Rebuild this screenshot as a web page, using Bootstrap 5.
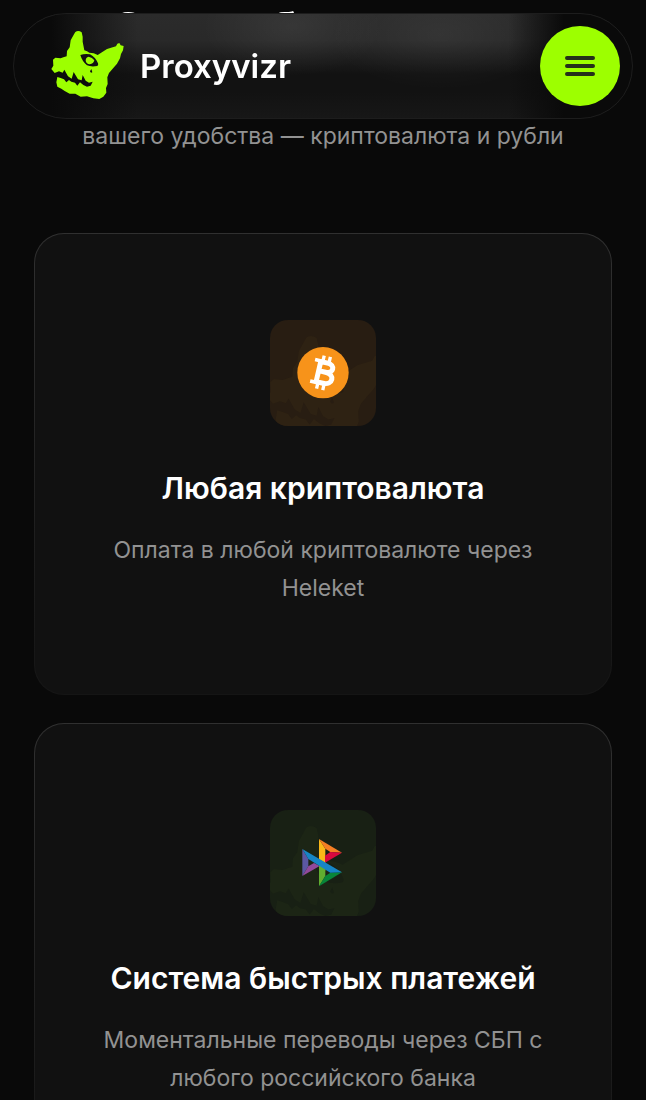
<!DOCTYPE html>
<html lang="ru" data-bs-theme="dark">
<head>
<meta charset="utf-8">
<meta name="viewport" content="width=device-width, initial-scale=1">
<title>Proxyvizr</title>
<link href="https://cdn.jsdelivr.net/npm/bootstrap@5.3.0/dist/css/bootstrap.min.css" rel="stylesheet">
<style>
  body { background: #090909; color: #fff; font-family: Inter, "Liberation Sans", sans-serif; overflow-x: hidden; }
  .site-bar {
    margin: 13px 13px 0; padding: 12px 12px 12px 36px;
    border: 1px solid #1d1d1d; border-radius: 60px;
    background:
      linear-gradient(90deg, #0a0a0a 6%, transparent 20%, transparent 80%, #0a0a0a 89%),
      radial-gradient(ellipse 90px 50px at 45% 12%, rgba(255,255,255,.06), transparent),
      radial-gradient(ellipse 110px 55px at 69% 20%, rgba(255,255,255,.05), transparent),
      linear-gradient(#2b2b2b, #292929 25%, #121212 58%, #121212 75%, #171717);
  }
  .brand-name { font-size: 33px; line-height: 40px; font-weight: 600; }
  .brand-mark { width: 78px; height: 72px; color: #9dff00; }
  .menu-btn { width: 80px; height: 80px; background: #9dff00; color: #24301a; }
  .menu-btn:hover { background: #8ce600; }
  .page-title { font-size: 50px; line-height: 60px; font-weight: 700; margin: 0; }
  .muted-text { font-size: 23px; line-height: 38px; color: #929292; margin: 0; }
  .intro { padding: 57px 0 78px; }
  .pay-card {
    padding: 86px 60px 87px; border: 1px solid transparent; border-radius: 30px;
    background: linear-gradient(#111, #111) padding-box, linear-gradient(#303030, #151515) border-box;
  }
  .pay-icon { width: 106px; height: 106px; border-radius: 18px; overflow: hidden; margin-bottom: 42px; }
  .pay-icon svg { display: block; }
  .pay-crypto { background: #281d12; color: #2e2213; }
  .pay-sbp { background: #182014; color: #1c2515; }
  .pay-title { font-size: 30px; line-height: 40px; font-weight: 600; margin: 0 0 23px; }
  .pay-list { gap: 28px; padding: 0 34px 28px; }
</style>
</head>
<body>
<svg width="0" height="0" class="position-absolute" aria-hidden="true">
  <symbol id="beast" viewBox="0 0 300 270" overflow="visible">
    <path fill="currentColor" fill-rule="evenodd" d="M110 36Q119 30 129 37L132 50L132 65L137 91Q146 94 152 98Q166 98 177 105L205 87L232 79L236 71L242 69L246 76L255 78L253 91L247 102L244 115L235 131L222 146L211 159L206 172L207 192L202 204L203 218L194 230L182 237L164 235L145 229L126 230L110 221L93 221L78 213L68 206L56 200L53 187L56 171L66 174L76 178L83 187L91 180L98 185L109 188L116 197L124 187L134 195L145 200L156 197L162 185L151 188L141 182L132 165L129 181L118 178L105 156L99 176L88 169L77 149L72 158L61 154L48 159L38 147L44 137L43 119L50 113L66 115L74 112L84 109L85 93L93 82L96 61L106 43ZM125 105Q137 101 154 103Q171 112 178 130Q180 135 176 138Q157 141 145 136Q131 125 125 105ZM150 110Q141 112 141 122Q143 132 153 133Q165 131 167 121Q161 112 150 110ZM158 147L154 154Q156 161 161 157Z"/>
  </symbol>
</svg>

<header class="site-bar fixed-top d-flex align-items-center justify-content-between">
  <a href="#" class="d-flex align-items-center gap-2 text-white text-decoration-none">
    <svg class="brand-mark" viewBox="34 30 234 216" aria-hidden="true"><use href="#beast" width="300" height="270"/></svg>
    <span class="brand-name ms-1">Proxyvizr</span>
  </a>
  <button type="button" class="menu-btn btn border-0 rounded-circle p-0 d-flex align-items-center justify-content-center" aria-label="Меню">
    <svg width="32" height="22" viewBox="0 0 32 22" stroke="currentColor" stroke-width="4" stroke-linecap="round" aria-hidden="true"><path d="M3 3H29M3 11H29M3 19H29"/></svg>
  </button>
</header>

<main class="text-center">
  <h1 class="page-title">Способы оплаты</h1>
  <div class="intro"><p class="muted-text">вашего удобства — криптовалюта и рубли</p></div>

  <div class="pay-list d-flex flex-column">
    <section class="pay-card">
      <div class="pay-icon pay-crypto mx-auto">
        <svg width="106" height="106" viewBox="0 0 318 318" aria-hidden="true">
          <use href="#beast" width="300" height="270" transform="translate(-69 -6) scale(1.62)"/>
          <circle cx="159" cy="158" r="77" fill="#f7931a"/>
          <g transform="translate(159 158) rotate(13)" fill="none" stroke="#fff">
            <path stroke-width="10" d="M-8 -51V-29M11 -51V-29M-8 29V51M11 29V51"/>
            <path stroke-width="11" d="M-32 -33H-10M-32 33H-10"/>
            <path stroke-width="15" d="M-14 -36V36M-14 -31H7C32 -31 32 -3 7 -3H-14M7 -3C38 -3 38 31 7 31H-14"/>
          </g>
        </svg>
      </div>
      <h2 class="pay-title">Любая криптовалюта</h2>
      <p class="muted-text">Оплата в любой криптовалюте через Heleket</p>
    </section>

    <section class="pay-card">
      <div class="pay-icon pay-sbp mx-auto">
        <svg width="106" height="106" viewBox="0 0 318 318" aria-hidden="true">
          <use href="#beast" width="300" height="270" transform="translate(-69 -6) scale(1.62)"/>
          <path fill="#5b57a2" d="M97 117L115 147V169L97 198Z"/>
          <path fill="#90499a" d="M97 198L115 169L132 159L149 168Z"/>
          <path fill="#fab718" d="M147 87L166 116V182L147 148Z"/>
          <path fill="#f57e24" d="M147 87L216 128L181 126L166 116Z"/>
          <path fill="#d9093f" d="M216 128L165 158V137L181 126Z"/>
          <path fill="#61ad30" d="M147 147L166 158V198L147 229Z"/>
          <path fill="#088539" d="M147 229L166 198L181 188L216 187Z"/>
          <path fill="#1685c5" d="M97 117L216 187L181 188L115 147Z"/>
        </svg>
      </div>
      <h2 class="pay-title">Система быстрых платежей</h2>
      <p class="muted-text">Моментальные переводы через СБП с любого российского банка</p>
    </section>
  </div>
</main>
<script src="https://cdn.jsdelivr.net/npm/bootstrap@5.3.0/dist/js/bootstrap.bundle.min.js"></script>
</body>
</html>
